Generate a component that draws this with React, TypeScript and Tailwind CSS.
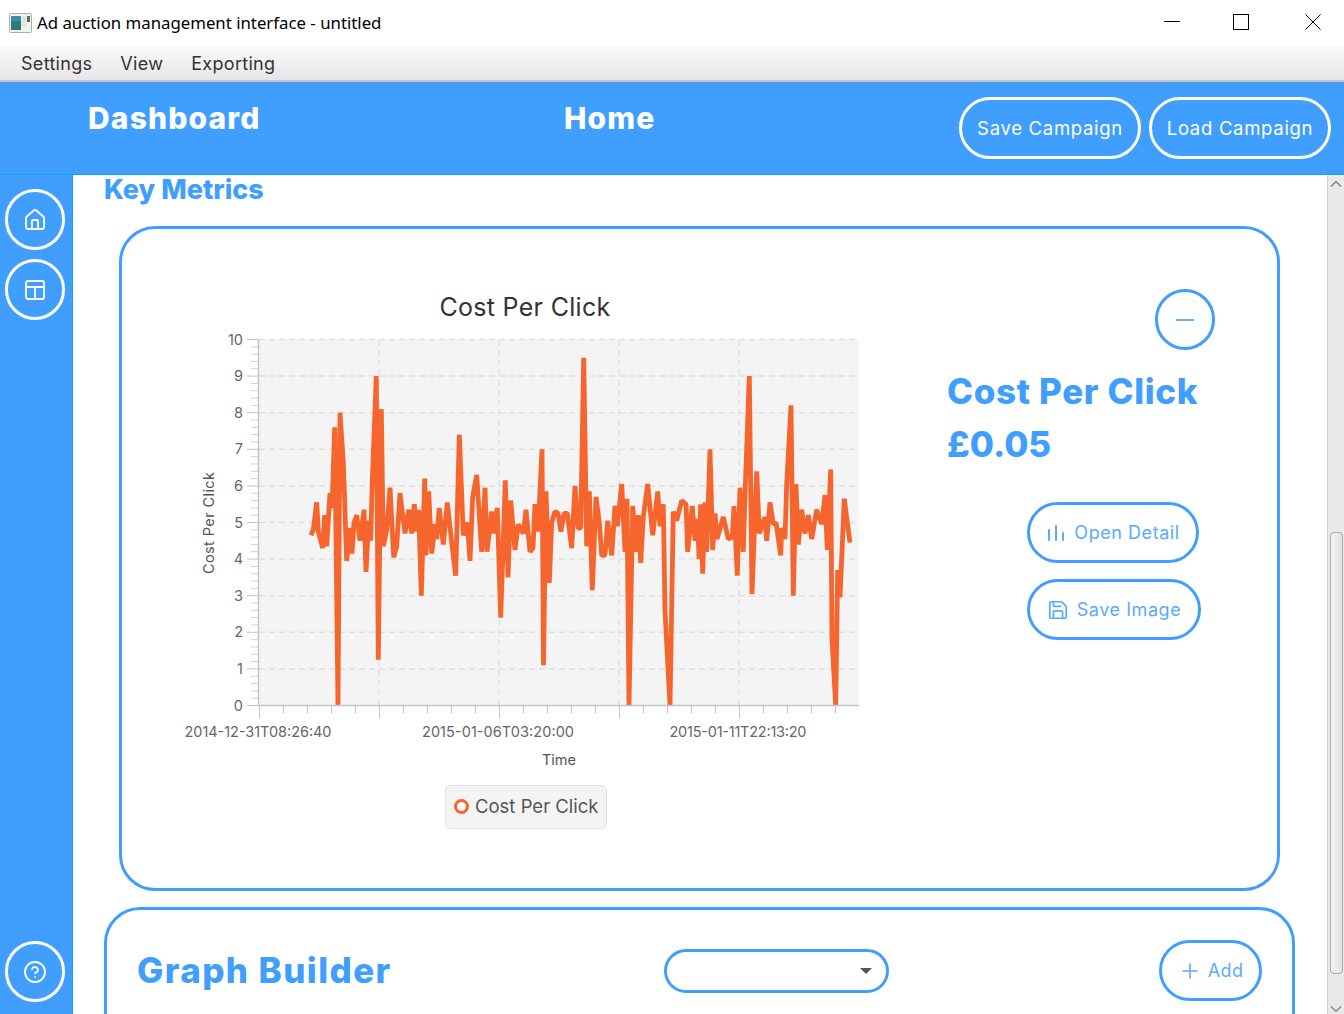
import React from 'react';
import { House, CircleHelp, Minus, Plus, Save } from 'lucide-react';

// [x, value] samples of the cost per click series, read off the plot
const series: [number, number][] = [
  [311, 4.65], [313.3, 4.8], [316.7, 5.55], [318.3, 4.75], [322.7, 4.3], [324.7, 5.2], [326.7, 4.35], [330, 5.8], [332, 5.4], [334.7, 7.6],
  [338, 0], [340, 8], [343.3, 6.65], [346.7, 3.95], [350, 4.85], [352, 4.15], [354, 5.0], [356.7, 5.2], [360, 4.5], [364, 5.35],
  [366, 3.65], [368.7, 5.05], [370.7, 4.5], [372.3, 6.15], [376.3, 9], [378.3, 1.25], [381.3, 8.1], [383.3, 4.35], [386.7, 4.8], [390, 5.95],
  [393.7, 4.05], [396.7, 4.35], [400, 5.8], [405, 4.7], [408.7, 5.35], [411.7, 4.7], [414.3, 5.5], [416.7, 4.75], [418.7, 5.35], [421.3, 3.0],
  [424.7, 6.2], [426, 4.1], [428.7, 5.85], [431.7, 4.15], [435, 4.95], [436.7, 4.55], [439.3, 5.4], [443.3, 4.4], [447.3, 5.55], [451.5, 4.5],
  [455.7, 3.55], [459.3, 7.4], [463.3, 4.65], [467.3, 5.0], [470, 3.95], [472.7, 5.7], [476.7, 6.3], [481.7, 4.2], [485, 5.95], [487, 4.2],
  [491.7, 5.3], [494, 4.7], [497.3, 5.4], [500.7, 2.4], [505.3, 6.15], [508, 3.5], [510.7, 5.6], [515, 4.25], [518.3, 4.95], [523.3, 4.7],
  [526, 5.35], [530, 4.2], [533, 4.3], [535, 5.5], [538, 4.75], [542, 7.0], [543.5, 1.1], [546, 5.85], [549.3, 3.35], [551.7, 5], [555, 5.3],
  [558, 5.25], [561, 4.75], [564, 5.25], [567.3, 5.25], [571.7, 4.3], [575, 6.0], [578, 4.85], [580.7, 4.85], [583.7, 9.5], [586.7, 4.35],
  [589.3, 5.85], [592.3, 3.15], [596, 5.7], [599.3, 5.0], [601.7, 4.1], [605, 4.1], [607.7, 5.05], [611.7, 4.1], [615, 5.45], [617.3, 4.9],
  [621.7, 6.05], [625, 4.2], [627, 5.65], [629, 0], [632.7, 5.45], [636, 4.2], [638.3, 5.2], [640.7, 3.9], [643.3, 5.15], [647.7, 6.05],
  [652.7, 4.65], [657.7, 5.85], [660, 4.9], [663.3, 5.5], [665, 2.6], [670, 0], [673.3, 5.3], [676.7, 5.05], [681.7, 5.6], [686, 5.5],
  [687.7, 4.2], [692.3, 5.45], [695, 4.5], [697.7, 5.1], [699, 4.0], [700.7, 5.5], [702.7, 3.6], [705, 5.55], [706.7, 4.2], [710, 7.0],
  [712.7, 4.25], [715, 5.25], [717, 4.55], [723.3, 5.15], [728.3, 4.55], [732.3, 4.6], [734, 5.45], [737.3, 3.55], [740, 5.95], [743.3, 4.2],
  [745, 5.75], [749.3, 9], [752, 3.05], [756.7, 6.4], [759.3, 4.7], [765, 5.15], [766.7, 4.5], [770, 5.55], [773.3, 4.95], [776, 5.0],
  [780.7, 4.1], [781.7, 4.85], [785, 4.55], [786.7, 6.05], [791, 8.2], [793.3, 3.0], [796, 6.05], [798.3, 4.4], [801.7, 5.35], [805, 4.7],
  [808.3, 5.2], [811.7, 4.55], [816.7, 5.35], [821.7, 4.95], [825, 5.75], [827.3, 4.25], [830.7, 6.45], [832, 1.8], [835.7, 0], [837.7, 3.7],
  [840, 2.95], [844.3, 5.65], [847.3, 5], [850, 4.45],
];

const plotTop = 339.5;
const plotBottom = 705.5;
const plotLeft = 259;
const plotRight = 859;
const toY = (v: number) => plotBottom - v * 36.6;
const points = series.map(([x, v]) => `${x},${toY(v).toFixed(1)}`).join(' ');
const yValues = [0, 1, 2, 3, 4, 5, 6, 7, 8, 9, 10];
const yMinor = Array.from({ length: 50 }, (_, i) => i * 0.2).filter((v) => !Number.isInteger(v));
const xTicks = Array.from({ length: 25 }, (_, i) => plotLeft + i * 24);
const xMajor = [379, 499, 619, 739];

const Chart = () => (
  <svg width={690} height={451} viewBox="180 324 690 451">
    <defs>
      <clipPath id="plot-clip">
        <rect x={plotLeft} y={plotTop} width={plotRight - plotLeft} height={plotBottom - plotTop} />
      </clipPath>
    </defs>
    <rect x={plotLeft} y={plotTop} width={plotRight - plotLeft} height={plotBottom - plotTop} fill="#f4f4f4" />
    {yValues.filter((v) => v > 0).map((v) => (
      <line key={v} x1={plotLeft} x2={plotRight} y1={toY(v)} y2={toY(v)} stroke="#e0e0e0" strokeWidth={1.5} strokeDasharray="6 4" />
    ))}
    {xMajor.map((x) => (
      <line key={x} x1={x} x2={x} y1={plotTop} y2={plotBottom} stroke="#dcdcdc" strokeWidth={1.2} strokeDasharray="6 4" />
    ))}
    <polyline points={points} fill="none" stroke="#f5652d" strokeWidth={4.8} strokeLinejoin="bevel" clipPath="url(#plot-clip)" />
    <line x1={258.5} x2={258.5} y1={plotTop} y2={plotBottom} stroke="#c4c4c4" strokeWidth={1.5} />
    <line x1={258} x2={plotRight} y1={plotBottom} y2={plotBottom} stroke="#c4c4c4" strokeWidth={1.5} />
    {yValues.map((v) => (
      <line key={v} x1={247} x2={258} y1={toY(v)} y2={toY(v)} stroke="#c4c4c4" strokeWidth={1} />
    ))}
    {yMinor.map((v) => (
      <line key={v} x1={251} x2={258} y1={toY(v)} y2={toY(v)} stroke="#d0d0d0" strokeWidth={1} />
    ))}
    {xTicks.map((x, i) => (
      <line key={x} x1={x + 0.5} x2={x + 0.5} y1={plotBottom} y2={plotBottom + (i % 5 === 0 ? 13 : 8)} stroke="#c4c4c4" strokeWidth={1} />
    ))}
    <g fontSize={14.5} fill="#666666" fontFamily="Inter, sans-serif">
      {yValues.map((v) => (
        <text key={v} x={243} y={toY(v) + 5} textAnchor="end">{v}</text>
      ))}
      <text x={258} y={737} textAnchor="middle" textLength={147}>2014-12-31T08:26:40</text>
      <text x={498} y={737} textAnchor="middle" textLength={152}>2015-01-06T03:20:00</text>
      <text x={738} y={737} textAnchor="middle" textLength={137}>2015-01-11T22:13:20</text>
      <text x={559} y={765} textAnchor="middle" fill="#555555">Time</text>
      <text x={214} y={523} textAnchor="middle" transform="rotate(-90 214 523)" fill="#555555" textLength={102}>Cost Per Click</text>
    </g>
  </svg>
);

const BarsIcon = () => (
  <svg width={20} height={20} viewBox="0 0 20 20" fill="none" stroke="currentColor" strokeWidth={2} strokeLinecap="round">
    <path d="M3 7v10M10 3v14M17 10v7" />
  </svg>
);

const LayoutIcon = () => (
  <svg width={24} height={24} viewBox="0 0 24 24" fill="none" stroke="currentColor" strokeWidth={1.8} strokeLinecap="round" strokeLinejoin="round">
    <rect x={3} y={3} width={18} height={18} rx={2} />
    <path d="M3 9h18M12 9v12" />
  </svg>
);

const SideButton = ({ children }: { children: React.ReactNode }) => (
  <button className="flex h-[61px] w-[60px] items-center justify-center rounded-full border-[3px] border-white text-white">
    {children}
  </button>
);

const OutlineButton = ({ icon, label, width }: { icon: React.ReactNode; label: string; width: string }) => (
  <button className={`flex h-[61px] items-center justify-center gap-[8px] rounded-full border-[3px] border-[#409eff] text-[18px] tracking-[0.55px] text-[#5aabff] ${width}`}>
    {icon}
    <span>{label}</span>
  </button>
);

const Scrollbar = () => (
  <div className="flex w-[17px] shrink-0 flex-col items-center border-l border-[#d0d0d0] bg-[#e9e9e9]">
    <svg className="mt-[5px]" width={12} height={8} viewBox="0 0 12 8" fill="none" stroke="#777777" strokeWidth={1.2}>
      <path d="M1 6.5L6 1.5L11 6.5" />
    </svg>
    <div className="mt-[344px] h-[442px] w-[13px] rounded-[4px] border border-[#a8a8a8] bg-gradient-to-r from-[#f4f4f4] to-[#e2e2e2]" />
    <svg className="mt-[31px]" width={12} height={8} viewBox="0 0 12 8" fill="none" stroke="#777777" strokeWidth={1.2}>
      <path d="M1 1.5L6 6.5L11 1.5" />
    </svg>
  </div>
);

export default function App() {
  return (
    <div className="flex h-[1014px] w-[1344px] flex-col overflow-hidden bg-white font-['Inter',sans-serif]">
      {/* window title bar */}
      <div className="flex h-[45px] shrink-0 items-center bg-white pl-[9px] font-['Noto_Sans',sans-serif] text-[16.8px] text-black">
        <svg width={23} height={20} viewBox="0 0 23 20" className="mr-[5px]">
          <rect x={0.5} y={0.5} width={22} height={19} rx={1} fill="#f2f2f2" stroke="#a9b0b6" />
          <rect x={2} y={3} width={10} height={14} fill="#2f7d72" />
          <rect x={2} y={3} width={10} height={5} fill="#3d8ea8" />
          <rect x={13} y={3} width={4} height={10} fill="#e2e2e2" />
          <rect x={18} y={3} width={3} height={6} fill="#4a7a50" />
        </svg>
        <span>Ad auction management interface - untitled</span>
        <div className="mb-[2px] ml-auto flex items-center">
          <svg width={16} height={16} viewBox="0 0 16 16" className="mr-[53px]" stroke="#000000" fill="none">
            <path d="M0 7.5H16" />
          </svg>
          <svg width={16} height={16} viewBox="0 0 16 16" className="mr-[56px]" stroke="#000000" fill="none">
            <rect x={0.5} y={0.5} width={15} height={15} />
          </svg>
          <svg width={16} height={16} viewBox="0 0 16 16" className="mr-[23px]" stroke="#000000" fill="none">
            <path d="M0.5 0.5L15.5 15.5M15.5 0.5L0.5 15.5" />
          </svg>
        </div>
      </div>

      {/* menu bar */}
      <div className="flex h-[37px] shrink-0 items-center gap-[28px] border-b-2 border-[#c4c4c4] bg-gradient-to-b from-[#fbfbfb] to-[#e6e6e6] pl-[21px] pt-[2px] text-[18px] tracking-[0.3px] text-[#333333]">
        <span>Settings</span>
        <span>View</span>
        <span>Exporting</span>
      </div>

      {/* header */}
      <div className="flex h-[93px] shrink-0 items-start border-b border-[#12a5e4] bg-[#409eff] text-white">
        <div className="ml-[88px] mt-[17px] w-[476px] text-[30px] font-extrabold leading-[38px] tracking-[1.15px]">Dashboard</div>
        <div className="mt-[17px] text-[30px] font-extrabold leading-[38px] tracking-[1.15px]">Home</div>
        <div className="ml-auto mr-[13px] mt-[15px] flex gap-[8px]">
          <button className="h-[62px] w-[182px] rounded-full border-[3px] border-white pt-[2px] text-[18.5px] tracking-[0.7px]">Save Campaign</button>
          <button className="h-[62px] w-[182px] rounded-full border-[3px] border-white pt-[2px] text-[18.5px] tracking-[0.7px]">Load Campaign</button>
        </div>
      </div>

      <div className="flex min-h-0 flex-1">
        {/* side rail */}
        <div className="flex w-[72px] shrink-0 flex-col bg-[#409eff] pb-[12px] pl-[5px] pt-[14px]">
          <div className="flex flex-col gap-[9px]">
            <SideButton><House size={24} strokeWidth={1.8} /></SideButton>
            <SideButton><LayoutIcon /></SideButton>
          </div>
          <div className="mt-auto">
            <SideButton><CircleHelp size={24} strokeWidth={1.8} /></SideButton>
          </div>
        </div>

        <div className="flex min-w-0 flex-1 border-l border-[#12a5e4]">
          {/* scrolled content */}
          <div className="min-w-0 flex-1 pl-[31px] pr-[32px]">
            <h2 className="h-[30px] text-[27px] font-extrabold leading-[30px] text-[#409eff]">Key Metrics</h2>

            <div className="mx-[15px] mt-[21px] flex h-[665px] rounded-[36px] border-[3px] border-[#409eff] pl-[58px] pt-[60px]">
              <div className="flex w-[690px] shrink-0 flex-col items-center pt-[1px]">
                <div className="h-[34px] text-[25px] leading-[34px] tracking-[0.3px] text-[#333333]">Cost Per Click</div>
                <Chart />
                <div className="ml-[2px] mt-[10px] flex h-[44px] w-[162px] items-center gap-[6px] rounded-[5px] border border-[#e2e2e2] bg-[#f4f4f4] pl-[8px] text-[18.5px] text-[#555555]">
                  <span className="-mt-[2px] h-[15px] w-[15px] rounded-full border-[3px] border-[#f5652d] bg-white" />
                  <span>Cost Per Click</span>
                </div>
              </div>

              <div className="ml-[77px] flex w-[268px] flex-col">
                <button className="flex h-[61px] w-[60px] items-center justify-center self-end rounded-full border-[3px] border-[#409eff] text-[#66b1ff]">
                  <Minus size={28} strokeWidth={1.6} />
                </button>
                <div className="mt-[15px] text-[35px] font-extrabold leading-[53px] tracking-[0.65px] text-[#409eff]">Cost Per Click</div>
                <div className="text-[35px] font-extrabold leading-[53px] text-[#409eff]">£0.05</div>
                <div className="ml-[80px] mt-[31px] flex flex-col items-start gap-[16px]">
                  <OutlineButton icon={<BarsIcon />} label="Open Detail" width="w-[172px]" />
                  <OutlineButton icon={<Save size={22} strokeWidth={1.9} />} label="Save Image" width="w-[174px]" />
                </div>
              </div>
            </div>

            <div className="mt-[16px] flex h-[200px] items-start rounded-[36px] border-[3px] border-[#409eff] pl-[30px] pr-[30px] pt-[27px]">
              <div className="w-[527px] text-[35px] font-extrabold leading-[66px] tracking-[1.4px] text-[#409eff]">Graph Builder</div>
              <div className="mt-[12px] flex h-[44px] w-[225px] items-center justify-end rounded-[22px] border-[3px] border-[#409eff] pr-[14px]">
                <span className="h-0 w-0 border-x-[6px] border-t-[6px] border-x-transparent border-t-[#555555]" />
              </div>
              <button className="ml-auto mt-[3px] flex h-[61px] w-[103px] items-center justify-center gap-[6px] rounded-full border-[3px] border-[#409eff] text-[18px] tracking-[0.4px] text-[#5aabff]">
                <Plus size={24} strokeWidth={1.6} />
                <span>Add</span>
              </button>
            </div>
          </div>
          <Scrollbar />
        </div>
      </div>
    </div>
  );
}
